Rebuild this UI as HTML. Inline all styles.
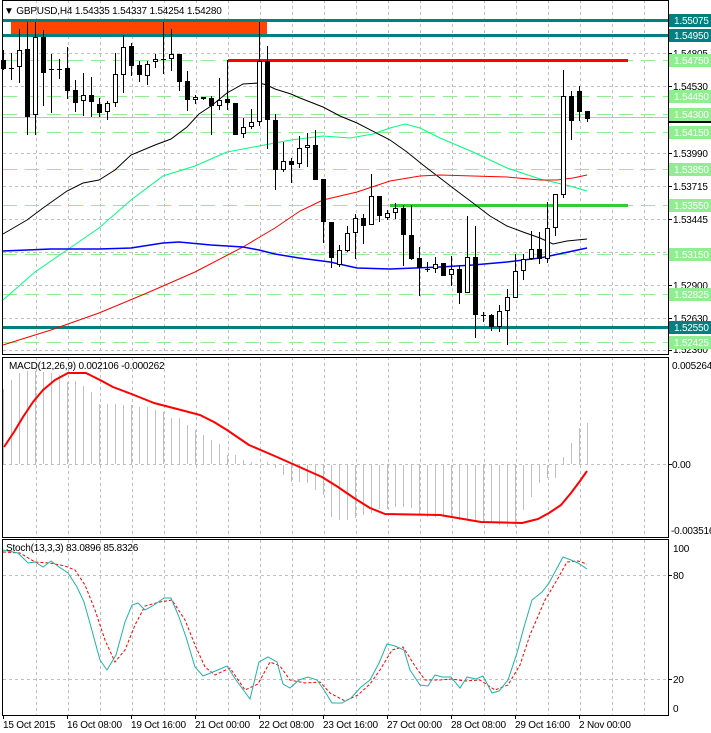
<!DOCTYPE html>
<html><head><meta charset="utf-8"><style>
html,body{margin:0;padding:0;background:#fff;width:711px;height:733px;overflow:hidden}
svg{display:block}
text{font-family:"Liberation Sans",sans-serif;font-size:10px;fill:#000;letter-spacing:-0.2px}
</style></head><body>
<svg width="711" height="733" viewBox="0 0 711 733" shape-rendering="crispEdges">
<g stroke="#c0c0c0" stroke-dasharray="3,3">
<path d="M36.5 0V354M68.5 0V354M100.5 0V354M132.5 0V354M164.5 0V354M196.5 0V354M228.5 0V354M260.5 0V354M292.5 0V354M324.5 0V354M356.5 0V354M388.5 0V354M420.5 0V354M452.5 0V354M484.5 0V354M516.5 0V354M548.5 0V354M580.5 0V354M612.5 0V354M644.5 0V354"/>
<path d="M36.5 357V537M68.5 357V537M100.5 357V537M132.5 357V537M164.5 357V537M196.5 357V537M228.5 357V537M260.5 357V537M292.5 357V537M324.5 357V537M356.5 357V537M388.5 357V537M420.5 357V537M452.5 357V537M484.5 357V537M516.5 357V537M548.5 357V537M580.5 357V537M612.5 357V537M644.5 357V537"/>
<path d="M36.5 540V715M68.5 540V715M100.5 540V715M132.5 540V715M164.5 540V715M196.5 540V715M228.5 540V715M260.5 540V715M292.5 540V715M324.5 540V715M356.5 540V715M388.5 540V715M420.5 540V715M452.5 540V715M484.5 540V715M516.5 540V715M548.5 540V715M580.5 540V715M612.5 540V715M644.5 540V715"/>
<path d="M3 53.5H669M3 86.5H669M3 153.5H669M3 186.5H669M3 219.5H669M3 252.5H669M3 285.5H669M3 318.5H669M3 350.5H669"/>
<path d="M3 464.5H669M3 575.5H669M3 679.5H669"/>
</g>
<path d="M3 117.5H669" stroke="#c0c0c0"/>
<g stroke="#90ee90" stroke-dasharray="14,8">
<path d="M3 60.5H669M3 96.5H669M3 114.5H669M3 132.5H669M3 169.5H669M3 205.5H669M3 254.5H669M3 294.5H669M3 342.5H669"/>
</g>
<rect x="11" y="21" width="256" height="13" fill="#ff4500"/>
<g fill="#008080"><rect x="3" y="19" width="666" height="3"/><rect x="3" y="34" width="666" height="3"/><rect x="3" y="326" width="666" height="3"/></g>
<rect x="228" y="59" width="400" height="3" fill="#ff0000"/>
<rect x="390" y="204" width="238" height="3" fill="#32cd32"/>
<g fill="none" stroke-width="1" shape-rendering="auto">
<polyline stroke="#00ff7f" points="3,300 35,272 67,250 99,228 131,200 163,176 195,166 227,152 259,146 291,140 323,136 350,138 373,134 390,128 405,124 420,128 440,138 473,152 507,168 540,179 570,186 587,191"/>
<polyline stroke="#000" points="3,234 27,220 43,208 67,191 83,183 99,180 115,170 131,155 155,145 171,139 187,127 199,114 211,106 227,93 243,84 259,83 267,85 275,89 291,94 300,98 323,107 340,116 357,123 390,140 407,152 423,165 440,178 457,191 473,203 490,216 507,226 523,232 540,238 553,244 567,241 587,239"/>
<polyline stroke="#ff0000" points="3,345 51,330 99,313 147,293 195,272 243,247 275,228 300,211 323,200 357,192 390,181 420,176 440,175 473,176 507,177 540,180 557,180 573,178 587,175"/>
<polyline stroke="#0000ff" stroke-width="1.5" points="3,251 51,249 99,249 131,248 163,243 179,242 211,245 243,247 259,250 275,254 299,258 330,262 357,268 390,269 440,267 473,265 507,262 540,258 573,251 587,248"/>
</g>
<path stroke="#000" d="M3.5 50V70M11.5 53V80M19.5 29V83M27.5 22V135M35.5 22V135M43.5 30V106M51.5 54V113M59.5 59V79M67.5 47V99M75.5 80V112M83.5 73V116M91.5 77V117M99.5 98V117M107.5 101V120M115.5 53V107M123.5 35V93M131.5 43V76M139.5 61V82M147.5 61V85M155.5 54V68M163.5 22V74M171.5 29V71M179.5 54V91M187.5 71V111M195.5 95V104M203.5 97V100M211.5 96V135M219.5 78V110M227.5 60V110M235.5 103V135M243.5 118V138M251.5 109V129M259.5 22V126M267.5 46V149M275.5 114V190M283.5 142V172M291.5 158V183M299.5 136V168M307.5 133V167M315.5 130V180M323.5 179V243M331.5 222V268M339.5 245V267M347.5 226V252M355.5 214V259M363.5 214V244M371.5 174V225M379.5 196V222M387.5 210V220M395.5 203V219M403.5 205V266M411.5 205V260M419.5 247V296M427.5 262V272M435.5 257V273M443.5 263V276M451.5 256V286M459.5 265V304M467.5 216V293M475.5 226V338M483.5 312V322M491.5 314V331M499.5 305V332M507.5 289V345M515.5 254V298M523.5 254V280M531.5 231V260M539.5 232V264M547.5 202V263M555.5 194V236M563.5 70V198M571.5 91V140M579.5 86V121M587.5 111V122"/>
<path stroke="#000" d="M9 68.5H14M49 69.5H54M57 69.5H62M161 59.5H166M425 269.5H430M481 315.5H486"/>
<g fill="#000">
<rect x="1" y="60" width="5" height="9"/><rect x="25" y="49" width="5" height="68"/><rect x="41" y="37" width="5" height="36"/><rect x="65" y="68" width="5" height="23"/><rect x="73" y="90" width="5" height="13"/><rect x="89" y="95" width="5" height="7"/><rect x="97" y="104" width="5" height="9"/><rect x="129" y="46" width="5" height="20"/><rect x="137" y="65" width="5" height="10"/><rect x="177" y="54" width="5" height="28"/><rect x="185" y="81" width="5" height="19"/><rect x="201" y="97" width="5" height="2"/><rect x="209" y="98" width="5" height="8"/><rect x="225" y="99" width="5" height="4"/><rect x="233" y="103" width="5" height="32"/><rect x="265" y="61" width="5" height="59"/><rect x="273" y="120" width="5" height="50"/><rect x="289" y="161" width="5" height="4"/><rect x="313" y="145" width="5" height="35"/><rect x="321" y="179" width="5" height="43"/><rect x="329" y="222" width="5" height="36"/><rect x="361" y="218" width="5" height="8"/><rect x="377" y="196" width="5" height="20"/><rect x="401" y="208" width="5" height="27"/><rect x="409" y="235" width="5" height="24"/><rect x="417" y="258" width="5" height="10"/><rect x="441" y="263" width="5" height="13"/><rect x="457" y="269" width="5" height="24"/><rect x="473" y="257" width="5" height="58"/><rect x="489" y="315" width="5" height="12"/><rect x="537" y="249" width="5" height="10"/><rect x="569" y="96" width="5" height="25"/><rect x="577" y="91" width="5" height="21"/><rect x="585" y="111" width="5" height="8"/>
</g>
<g fill="#fff" stroke="#000">
<rect x="17.5" y="50.5" width="4" height="16"/><rect x="33.5" y="37.5" width="4" height="77"/><rect x="81.5" y="95.5" width="4" height="5"/><rect x="105.5" y="103.5" width="4" height="8"/><rect x="113.5" y="74.5" width="4" height="28"/><rect x="121.5" y="47.5" width="4" height="27"/><rect x="145.5" y="64.5" width="4" height="11"/><rect x="153.5" y="59.5" width="4" height="2"/><rect x="169.5" y="54.5" width="4" height="4"/><rect x="193.5" y="97.5" width="4" height="2"/><rect x="217.5" y="100.5" width="4" height="5"/><rect x="241.5" y="127.5" width="4" height="6"/><rect x="249.5" y="122.5" width="4" height="4"/><rect x="257.5" y="61.5" width="4" height="60"/><rect x="281.5" y="161.5" width="4" height="8"/><rect x="297.5" y="148.5" width="4" height="15"/><rect x="305.5" y="145.5" width="4" height="2"/><rect x="337.5" y="250.5" width="4" height="14"/><rect x="345.5" y="233.5" width="4" height="17"/><rect x="353.5" y="218.5" width="4" height="14"/><rect x="369.5" y="196.5" width="4" height="28"/><rect x="385.5" y="213.5" width="4" height="4"/><rect x="393.5" y="208.5" width="4" height="4"/><rect x="433.5" y="264.5" width="4" height="4"/><rect x="449.5" y="269.5" width="4" height="5"/><rect x="465.5" y="257.5" width="4" height="35"/><rect x="497.5" y="311.5" width="4" height="15"/><rect x="505.5" y="297.5" width="4" height="13"/><rect x="513.5" y="271.5" width="4" height="26"/><rect x="521.5" y="259.5" width="4" height="11"/><rect x="529.5" y="249.5" width="4" height="9"/><rect x="545.5" y="228.5" width="4" height="30"/><rect x="553.5" y="194.5" width="4" height="33"/><rect x="561.5" y="96.5" width="4" height="98"/>
</g>
<path stroke="#c0c0c0" d="M3.5 464V389M11.5 464V380M19.5 464V373M27.5 464V371M35.5 464V371M43.5 464V372M51.5 464V373M59.5 464V375M67.5 464V382M75.5 464V381M83.5 464V386M91.5 464V392M99.5 464V404M107.5 464V404M115.5 464V404M123.5 464V405M131.5 464V405M139.5 464V407M147.5 464V407M155.5 464V410M163.5 464V412M171.5 464V418M179.5 464V418M187.5 464V425M195.5 464V430M203.5 464V435M211.5 464V440M219.5 464V444M227.5 464V455M235.5 464V455M243.5 464V460M251.5 464V462M267.5 464V462M275.5 465V468M283.5 465V475M291.5 465V482M299.5 465V482M307.5 465V483M315.5 465V490M323.5 465V495M331.5 465V517M339.5 465V520M347.5 465V520M355.5 465V518M363.5 465V515M371.5 465V513M379.5 465V509M387.5 465V509M395.5 465V507M403.5 465V507M411.5 465V508M419.5 465V515M427.5 465V517M435.5 465V517M443.5 465V517M451.5 465V518M459.5 465V520M467.5 465V520M475.5 465V521M483.5 465V522M491.5 465V523M499.5 465V525M507.5 465V527M515.5 465V527M523.5 465V510M531.5 465V497M539.5 465V483M547.5 465V478M555.5 465V478M563.5 464V457M571.5 464V443M579.5 464V428M587.5 464V423"/>
<polyline fill="none" stroke="#ff0000" stroke-width="2" stroke-linejoin="round" shape-rendering="auto" points="4,447 14,432 23,417 33,402 43,390 55,380 68,373 86,373 100,380 113,387 134,395 154,403 181,410 200,415 214,422 227,430 249,445 263,451 277,457 295,465 322,477 338,487 354,498 370,508 385,514 440,515 481,522 522,523 538,519 549,513 561,505 571,493 580,481 587,471"/>
<polyline fill="none" stroke="#ff0000" stroke-dasharray="3,2" shape-rendering="auto" points="3,552 20,553 35,562 50,563 65,566 75,570 85,585 95,610 105,640 115,662 125,650 135,625 145,606 160,602 172,600 185,620 195,645 205,667 215,675 230,668 245,690 258,684 270,662 280,666 290,680 305,683 320,682 330,693 345,701 358,695 370,684 380,670 392,650 403,647 415,666 425,680 440,680 452,679 465,681 480,680 495,690 508,685 520,665 530,635 545,600 557,580 567,562 578,561 587,564"/>
<polyline fill="none" stroke="#20b2aa" shape-rendering="auto" points="3,550 18,553 28,563 35,562 43,567 51,561 59,567 68,573 77,587 84,602 91,627 100,660 107,670 116,655 125,622 132,605 138,603 145,610 154,605 164,598 171,598 179,617 186,637 195,667 203,676 213,672 227,666 236,680 250,699 259,662 268,657 277,662 283,684 290,688 299,680 308,677 317,680 324,690 332,703 342,703 351,698 361,687 370,680 379,663 387,644 395,646 404,650 410,670 420,685 428,686 435,675 442,677 451,677 460,688 467,677 476,679 483,676 492,693 499,691 508,680 517,653 524,627 532,600 542,592 549,583 556,570 563,557 571,560 578,563 587,569"/>
<g fill="none" stroke="#000">
<rect x="2.5" y="0.5" width="666" height="354"/>
<rect x="2.5" y="357.5" width="666" height="180"/>
<rect x="2.5" y="539.5" width="666" height="176"/>
</g>
<path stroke="#000" d="M669 53.5h3M669 86.5h3M669 153.5h3M669 186.5h3M669 219.5h3M669 285.5h3M669 318.5h3M669 350.5h3M669 464.5h3M669 575.5h3M669 679.5h3"/>
<g>
<text x="673" y="57">1.54805</text>
<text x="673" y="90">1.54530</text>
<text x="673" y="157">1.53990</text>
<text x="673" y="190">1.53715</text>
<text x="673" y="223">1.53445</text>
<text x="673" y="289">1.52900</text>
<text x="673" y="322">1.52630</text>
<text x="673" y="353">1.52360</text>
</g>
<rect x="669" y="117" width="42" height="6" fill="#000"/>
<g fill="#008080"><rect x="669" y="14" width="42" height="13"/><rect x="669" y="29" width="42" height="13"/><rect x="669" y="321" width="42" height="13"/></g>
<g fill="#90ee90"><rect x="669" y="54" width="42" height="13"/><rect x="669" y="90" width="42" height="13"/><rect x="669" y="108" width="42" height="13"/><rect x="669" y="126" width="42" height="13"/><rect x="669" y="163" width="42" height="13"/><rect x="669" y="199" width="42" height="13"/><rect x="669" y="248" width="42" height="13"/><rect x="669" y="288" width="42" height="13"/><rect x="669" y="336" width="42" height="13"/></g>
<g>
<text x="674" y="24" style="fill:#fff">1.55075</text><text x="674" y="39" style="fill:#fff">1.54950</text><text x="674" y="331" style="fill:#fff">1.52550</text>
<text x="674" y="64" style="fill:#fff">1.54750</text><text x="674" y="100" style="fill:#fff">1.54450</text><text x="674" y="118" style="fill:#fff">1.54300</text><text x="674" y="136" style="fill:#fff">1.54150</text><text x="674" y="173" style="fill:#fff">1.53850</text><text x="674" y="209" style="fill:#fff">1.53550</text><text x="674" y="258" style="fill:#fff">1.53150</text><text x="674" y="298" style="fill:#fff">1.52825</text><text x="674" y="346" style="fill:#fff">1.52425</text>
</g>
<text x="672" y="369">0.005264</text>
<text x="672" y="468">0.00</text>
<text x="671" y="534">-0.003516</text>
<text x="673" y="552">100</text>
<text x="673" y="579">80</text>
<text x="673" y="683">20</text>
<text x="673" y="712">0</text>
<text x="4" y="14">▼ GBPUSD,H4  1.54335 1.54337 1.54254 1.54280</text>
<text x="9" y="369">MACD(12,26,9) 0.002106 -0.000262</text>
<text x="6" y="551">Stoch(13,3,3) 83.0896 85.8326</text>
<path stroke="#000" d="M3.5 716v3M67.5 716v3M131.5 716v3M195.5 716v3M259.5 716v3M323.5 716v3M387.5 716v3M451.5 716v3M515.5 716v3M579.5 716v3"/>
<g>
<text x="3" y="728">15 Oct 2015</text>
<text x="67" y="728">16 Oct 08:00</text>
<text x="131" y="728">19 Oct 16:00</text>
<text x="195" y="728">21 Oct 00:00</text>
<text x="259" y="728">22 Oct 08:00</text>
<text x="323" y="728">23 Oct 16:00</text>
<text x="387" y="728">27 Oct 00:00</text>
<text x="451" y="728">28 Oct 08:00</text>
<text x="515" y="728">29 Oct 16:00</text>
<text x="579" y="728">2 Nov 00:00</text>
</g>
</svg>
</body></html>
